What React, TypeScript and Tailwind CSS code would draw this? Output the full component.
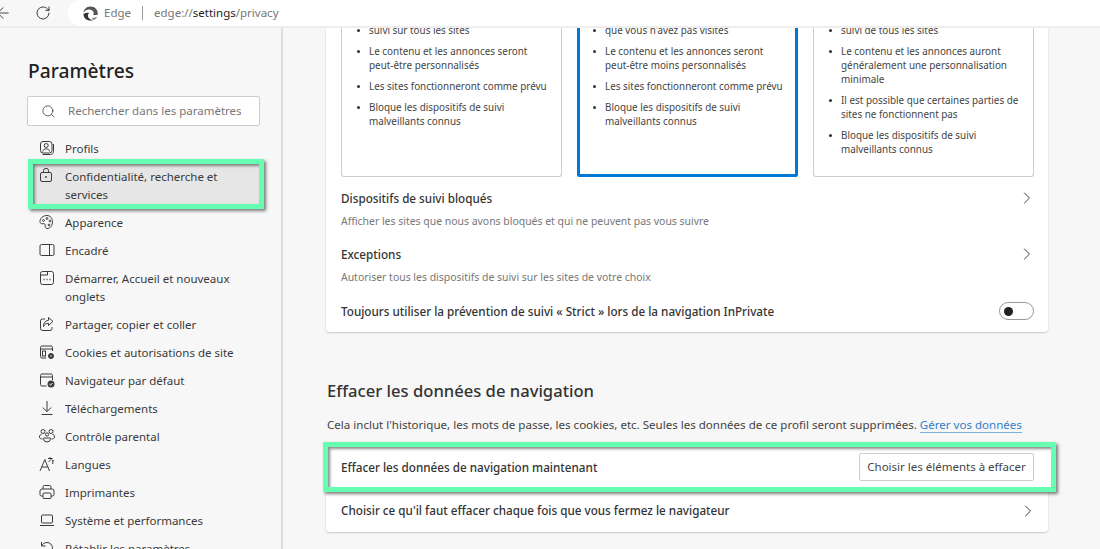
import React from 'react';
import { ChevronRight, Search, RotateCw, ArrowLeft } from 'lucide-react';

const ink = 'currentColor';

const Icon: React.FC<{ children: React.ReactNode }> = ({ children }) => (
    <svg width="16" height="16" viewBox="0 0 16 16" fill="none" stroke={ink} strokeWidth="1" className="shrink-0 text-[#3b3b3b]">
        {children}
    </svg>
);

const icons: Record<string, React.ReactNode> = {
    profile: (
        <>
            <rect x="1.5" y="1.5" width="11.5" height="11.5" rx="2.5" />
            <circle cx="7.2" cy="5.5" r="2" />
            <path d="M3.8 11.5c.3-2 1.6-2.6 3.4-2.6s3.1.6 3.4 2.6" />
            <path d="M3.5 14.5h8c1.7 0 3-1.3 3-3V4" />
        </>
    ),
    lock: (
        <>
            <rect x="2.5" y="5.5" width="11" height="9" rx="1.5" />
            <path d="M5.5 5.5V3.8a2.5 2.5 0 0 1 5 0v1.7" />
            <circle cx="8" cy="10" r=".9" fill={ink} stroke="none" />
        </>
    ),
    palette: (
        <>
            <path d="M8 1.5c-3.8 0-7 2.6-7 6 0 1.8 1.4 2.6 2.8 2.2 1.5-.4 2.7.4 2.4 1.8-.3 1.5.4 3 2 3 3.3 0 5.3-3.2 5.3-6.7 0-3.6-2.4-6.3-5.5-6.3z" />
            <circle cx="4.5" cy="6.5" r=".9" />
            <circle cx="8" cy="4.5" r=".9" />
            <circle cx="11" cy="7" r=".9" />
            <circle cx="10" cy="11" r=".9" />
        </>
    ),
    sidebar: (
        <>
            <rect x="1" y="2.5" width="14" height="11" rx="1.5" />
            <path d="M10.5 2.5v11" />
        </>
    ),
    start: (
        <>
            <rect x="1.5" y="1.5" width="13" height="13" rx="2" />
            <path d="M1.5 5h7V1.5" />
            <path d="M4.5 9.5h1M7.5 9.5h1M10.5 9.5h1" strokeWidth="1.5" />
        </>
    ),
    share: (
        <>
            <path d="M6 3H3.5a2 2 0 0 0-2 2v7.5a2 2 0 0 0 2 2H11a2 2 0 0 0 2-2V11" />
            <path d="M9.5 1.5 14 5.5l-4.500 4V7.300C7 7.300 5.500 8.500 4.500 10.500c0-3.500 1.800-6 5-6.200z" />
        </>
    ),
    cookies: (
        <>
            <path d="M7 14H3a1.500 1.500 0 0 1-1.500-1.500v-9A1.500 1.500 0 0 1 3 2h9a1.500 1.500 0 0 1 1.500 1.500V7" />
            <path d="M1.5 5h12" />
            <rect x="3.5" y="7" width="3" height="5" />
            <circle cx="12" cy="12" r="2.5" fill={ink} />
            <circle cx="12" cy="12" r=".8" fill="#f7f7f7" stroke="none" />
        </>
    ),
    browser: (
        <>
            <path d="M7.500 14H3a1.500 1.500 0 0 1-1.500-1.500v-9A1.500 1.500 0 0 1 3 2h9a1.500 1.500 0 0 1 1.500 1.500V8" />
            <path d="M1.5 5h12" />
            <circle cx="12" cy="12" r="3.5" fill={ink} stroke="none" />
            <path d="m10.300 12 1.200 1.200 2-2.200" stroke="#f7f7f7" />
        </>
    ),
    download: <path d="M8 1v10.500M3.800 7.500 8 11.700l4.200-4.200M2.500 14.500h11" />,
    family: (
        <>
            <circle cx="4" cy="3.5" r="2" />
            <circle cx="12" cy="3.5" r="2" />
            <circle cx="8" cy="6.5" r="1.6" />
            <path d="M2.500 6.500C1 6.500.5 7.500.5 9c0 1.500 1.500 2 3 2M13.500 6.500c1.500 0 2 1 2 2.500 0 1.500-1.500 2-3 2" />
            <path d="M4.500 10h7v.5a3.500 3.500 0 0 1-7 0z" />
        </>
    ),
    language: (
        <>
            <path d="M1 15 5.800 3.500 10.500 15M2.800 11h6" />
            <path d="M9 2.500h4.500M11 1v1.500M13 2.500 9.500 6M13.800 8V4M13.800 4l1.200 1.200" />
        </>
    ),
    printer: (
        <>
            <path d="M4 5V3a1.500 1.500 0 0 1 1.500-1.500h5A1.500 1.500 0 0 1 12 3v2" />
            <path d="M4 12H2.500a1.500 1.500 0 0 1-1.500-1.500V7a2 2 0 0 1 2-2h10a2 2 0 0 1 2 2v3.500a1.500 1.500 0 0 1-1.500 1.500H12" />
            <rect x="4" y="9" width="8" height="5.5" rx="1" />
        </>
    ),
    laptop: (
        <>
            <rect x="2.5" y="3" width="11" height="8" rx="1" />
            <path d="M1 13.500h14" />
        </>
    ),
    reset: <path d="M2.500 2v4h4M2.500 6c1-2 3-3.500 5.500-3.500a5.500 5.500 0 1 1-5.300 7" />,
};

const navItems = [
    { icon: 'profile', lines: ['Profils'] },
    { icon: 'lock', lines: ['Confidentialité, recherche et', 'services'], active: true },
    { icon: 'palette', lines: ['Apparence'] },
    { icon: 'sidebar', lines: ['Encadré'] },
    { icon: 'start', lines: ['Démarrer, Accueil et nouveaux', 'onglets'] },
    { icon: 'share', lines: ['Partager, copier et coller'] },
    { icon: 'cookies', lines: ['Cookies et autorisations de site'] },
    { icon: 'browser', lines: ['Navigateur par défaut'] },
    { icon: 'download', lines: ['Téléchargements'] },
    { icon: 'family', lines: ['Contrôle parental'] },
    { icon: 'language', lines: ['Langues'] },
    { icon: 'printer', lines: ['Imprimantes'] },
    { icon: 'laptop', lines: ['Système et performances'] },
    { icon: 'reset', lines: ['Rétablir les paramètres'] },
];

const cards = [
    {
        selected: false,
        items: [
            ['suivi sur tous les sites'],
            ['Le contenu et les annonces seront', 'peut-être personnalisés'],
            ['Les sites fonctionneront comme prévu'],
            ['Bloque les dispositifs de suivi', 'malveillants connus'],
        ],
    },
    {
        selected: true,
        items: [
            ["que vous n'avez pas visités"],
            ['Le contenu et les annonces seront', 'peut-être moins personnalisés'],
            ['Les sites fonctionneront comme prévu'],
            ['Bloque les dispositifs de suivi', 'malveillants connus'],
        ],
    },
    {
        selected: false,
        items: [
            ['suivi de tous les sites'],
            ['Le contenu et les annonces auront', 'généralement une personnalisation', 'minimale'],
            ['Il est possible que certaines parties de', 'sites ne fonctionnent pas'],
            ['Bloque les dispositifs de suivi', 'malveillants connus'],
        ],
    },
];

const Chevron = () => <ChevronRight className="w-[20px] h-[20px] text-[#333] shrink-0" strokeWidth={1.15} />;

const LinkRow: React.FC<{ title: string; sub: string }> = ({ title, sub }) => (
    <div className="flex items-start justify-between h-[56px]">
        <div className="pt-[1px]">
            <div className="text-[11.7px] leading-[18px] font-medium text-[#333]">{title}</div>
            <div className="text-[10.45px] leading-[14px] mt-[7px] text-[#777]">{sub}</div>
        </div>
        <div className="-mr-[3px]">
            <Chevron />
        </div>
    </div>
);

export default function App() {
    return (
        <div className="w-[1100px] h-[549px] overflow-hidden flex flex-col bg-[#f7f7f7] text-[#333] font-['Noto_Sans','Open_Sans',sans-serif]">
            {/* barre du navigateur */}
            <div className="h-[28px] shrink-0 flex items-center border-b-2 border-[#eeeeee]">
                <ArrowLeft className="w-[18px] h-[18px] -ml-[6px] text-[#222] shrink-0" strokeWidth={1.1} />
                <RotateCw className="w-[16px] h-[16px] ml-[23px] text-[#222] shrink-0" strokeWidth={1.3} />
                <div className="ml-[17px] flex-1 h-[26px] bg-white rounded-l-[13px] flex items-center pl-[15px] text-[11.5px] text-[#777]">
                    <svg width="15" height="15" viewBox="0 0 16 16" className="shrink-0">
                        <path d="M8 .5C3.800.5.600 3.600.500 7.500c1-2.500 3.300-3.800 5.700-3.800 3 0 5.300 1.700 5.300 4 0 .9-.5 1.500-1.200 1.900h5.200c.2-.6.200-1.200.2-1.900C15.700 3.500 12.300.5 8 .5z" fill="#555" />
                        <path d="M.500 8.500c0 4 3.200 7 7.300 7 1.300 0 2.200-.2 3.200-.7-3.300.3-5.800-1.800-5.800-4.600 0-1.400.7-2.500 1.800-3.100C4 7 2 7.500.500 8.500z" fill="#333" />
                        <path d="M11 15c2-.8 3.400-2 4.200-3.600-1.500 1-3.500 1.400-5.400.9.300 1.200.700 2 1.200 2.700z" fill="#777" />
                    </svg>
                    <span className="ml-[6px]">Edge</span>
                    <span className="mx-[11px] w-px h-[14px] bg-[#999]" />
                    <span>
                        edge://<span className="text-[#222]">settings</span>/privacy
                    </span>
                </div>
            </div>

            <div className="flex-1 min-h-0 flex">
                {/* menu de gauche */}
                <aside className="w-[283px] shrink-0 border-r-2 border-[#dddddd] overflow-hidden">
                    <h1 className="ml-[28px] mt-[28px] text-[19.2px] leading-[30px] font-medium text-[#222]">Paramètres</h1>
                    <div className="ml-[27px] mt-[10px] w-[233px] h-[30px] bg-white border border-[#cccccc] rounded-[2px] flex items-center pl-[13px] text-[11.5px] text-[#777]">
                        <Search className="w-[15px] h-[15px] text-[#333]" strokeWidth={1.2} />
                        <span className="ml-[12px]">Rechercher dans les paramètres</span>
                    </div>
                    <nav className="mt-[9px] flex flex-col text-[11.5px] leading-[18px] text-[#3a3a3a]">
                        {navItems.map((item) =>
                            item.active ? (
                                <div
                                    key={item.icon}
                                    className="-mt-[4px] ml-[28px] w-[236px] h-[50px] flex gap-[11px] pl-[5px] items-start border-[5px] border-[#66ffb2] bg-[#e6e6e6] shadow-[2px_2px_3px_rgba(0,0,0,0.5),inset_2px_2px_3px_rgba(0,0,0,0.45)]"
                                >
                                    <div className="mt-[3px]">
                                        <Icon>{icons[item.icon]}</Icon>
                                    </div>
                                    <div className="mt-[4px]">
                                        {item.lines.map((l) => (
                                            <div key={l}>{l}</div>
                                        ))}
                                    </div>
                                </div>
                            ) : (
                                <div key={item.icon} className="flex gap-[10px] pl-[39px] py-[5px] items-start">
                                    <Icon>{icons[item.icon]}</Icon>
                                    <div>
                                        {item.lines.map((l) => (
                                            <div key={l}>{l}</div>
                                        ))}
                                    </div>
                                </div>
                            ),
                        )}
                    </nav>
                </aside>

                {/* contenu */}
                <main className="flex-1 min-w-0 overflow-hidden pl-[43px]">
                    <div className="w-[722px] h-[304px] bg-white rounded-b-[4px] shadow-[0_1px_2px_rgba(0,0,0,0.2)] pl-[15px] pr-[14px]">
                        <div className="h-[149px] overflow-hidden flex gap-[15px]">
                            {cards.map((card, i) => (
                                <div
                                    key={i}
                                    className={
                                        card.selected
                                            ? 'w-[221px] h-[149px] rounded-b-[3px] overflow-hidden border-x-[3px] border-b-[3px] border-[#0078d4] pl-[13px]'
                                            : 'w-[221px] h-[149px] rounded-b-[3px] overflow-hidden border-x border-b border-[#cccccc] pl-[15px]'
                                    }
                                >
                                    <ul className="-mt-[5px] text-[9.9px] leading-[14px] text-[#444] flex flex-col gap-[7px]">
                                        {card.items.map((lines, j) => (
                                            <li key={j} className="flex">
                                                <span className="w-[2.5px] h-[2.5px] mt-[6px] mr-[9.5px] rounded-full bg-[#333] shrink-0" />
                                                <div>
                                                    {lines.map((l) => (
                                                        <div key={l} className="whitespace-nowrap">
                                                            {l}
                                                        </div>
                                                    ))}
                                                </div>
                                            </li>
                                        ))}
                                    </ul>
                                </div>
                            ))}
                        </div>
                        <div className="mt-[11px]">
                            <LinkRow title="Dispositifs de suivi bloqués" sub="Afficher les sites que nous avons bloqués et qui ne peuvent pas vous suivre" />
                            <LinkRow title="Exceptions" sub="Autoriser tous les dispositifs de suivi sur les sites de votre choix" />
                        </div>
                        <div className="flex items-center justify-between h-[20px] mt-[1px]">
                            <span className="text-[11.7px] font-medium text-[#333] pt-[1px]">Toujours utiliser la prévention de suivi « Strict » lors de la navigation InPrivate</span>
                            <span className="w-[35px] h-[18px] rounded-full border border-[#999] bg-white flex items-center pl-[4px]">
                                <span className="w-[9px] h-[9px] rounded-full bg-[#222]" />
                            </span>
                        </div>
                    </div>

                    <h2 className="mt-[47px] ml-px text-[16.6px] leading-[24px] font-medium text-[#333]">Effacer les données de navigation</h2>
                    <p className="mt-[13px] ml-px text-[11.55px] leading-[18px] text-[#444] whitespace-nowrap">
                        Cela inclut l'historique, les mots de passe, les cookies, etc. Seules les données de ce profil seront supprimées.{' '}
                        <span className="text-[#2f80cc] border-b border-[#7ab0e0]">Gérer vos données</span>
                    </p>

                    <div className="mt-[8px] w-[722px] h-[90px] bg-white rounded-[4px] shadow-[0_1px_2px_rgba(0,0,0,0.2)]">
                        <div className="-ml-[3px] w-[733px] h-[50px] border-[5px] border-[#66ffb2] bg-white shadow-[2px_2px_3px_rgba(0,0,0,0.5),inset_2px_2px_3px_rgba(0,0,0,0.45)] flex items-center justify-between pl-[13px] pr-[17px]">
                            <span className="text-[11.7px] font-medium text-[#333] pt-[1px]">Effacer les données de navigation maintenant</span>
                            <button className="w-[175px] h-[28px] bg-white border border-[#cccccc] rounded-[2px] text-[11.5px] text-[#444]">
                                Choisir les éléments à effacer
                            </button>
                        </div>
                        <div className="h-[40px] pb-[3px] flex items-center justify-between pl-[15px] pr-[10px]">
                            <span className="text-[11.7px] font-medium text-[#333]">Choisir ce qu'il faut effacer chaque fois que vous fermez le navigateur</span>
                            <Chevron />
                        </div>
                    </div>
                </main>
            </div>
        </div>
    );
}
